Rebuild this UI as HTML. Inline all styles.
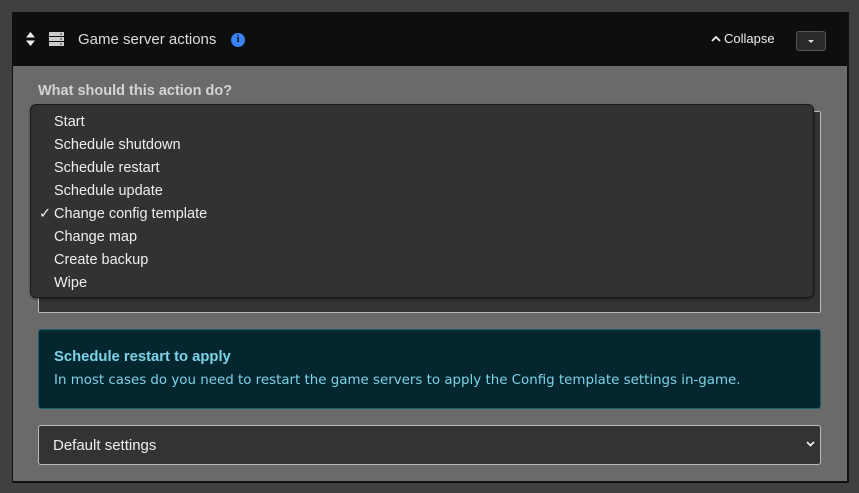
<!DOCTYPE html>
<html><head><style>
body{margin:0;width:859px;height:493px;background:#404040;font-family:"Liberation Sans",sans-serif;position:relative;overflow:hidden}
.panel{position:absolute;left:12px;top:12px;width:834px;height:468px;background:#6a6a6a;border:1px solid #111;border-right:2px solid #111;border-bottom:2px solid #111}
.hdr{position:absolute;left:0;top:0;right:0;height:53px;background:#0e0e0e;color:#ddd}
.abs{position:absolute}
.menu{position:absolute;left:30px;top:104px;width:782px;height:192px;background:#323232;border:1px solid #1a1a1a;border-radius:6px;box-shadow:0 1px 2px rgba(0,0,0,.5);color:#eee;font-size:14.5px}
.menu div{position:absolute;left:23px}
</style></head><body>
<div class="panel">
 <div class="hdr">
  <svg class="abs" style="left:13px;top:19px" width="9" height="14" viewBox="0 0 9 14"><path d="M4.5 0L9 5.5H0Z M4.5 14L9 8.5H0Z" fill="#eee"/></svg>
  <svg class="abs" style="left:36px;top:19px" width="15" height="14" viewBox="0 0 15 14"><rect y="0" width="15" height="4" fill="#ccc"/><rect y="5" width="15" height="4" fill="#ccc"/><rect y="10" width="15" height="4" fill="#ccc"/><rect x="11" y="1.5" width="2" height="1" fill="#333"/><rect x="11" y="6.5" width="2" height="1" fill="#333"/><rect x="11" y="11.5" width="2" height="1" fill="#333"/></svg>
  <div class="abs" style="left:65px;top:18px;font-size:15px;color:#ddd">Game server actions</div>
  <div class="abs" style="left:218px;top:20px;width:14px;height:14px;border-radius:50%;background:#3b82f6;color:#0e0e0e;font:bold 10px/14px 'Liberation Serif',serif;text-align:center">i</div>
  <svg class="abs" style="left:698px;top:22px" width="10" height="7" viewBox="0 0 10 7"><path d="M1 6L5 2L9 6" stroke="#eee" stroke-width="1.8" fill="none"/></svg>
  <div class="abs" style="left:711px;top:18px;font-size:13px;color:#eee">Collapse</div>
  <div class="abs" style="left:783px;top:18px;width:28px;height:18px;border:1px solid #555;border-radius:3px;background:#2a2a2a"><div style="position:absolute;left:11px;top:8px;border:3px solid transparent;border-top:3px solid #ddd"></div></div>
 </div>
</div>
<div class="abs" style="left:38px;top:83px;font-size:14.5px;font-weight:bold;color:#d4d4d4">What should this action do?</div>
<div class="abs" style="left:38px;top:111px;width:781px;height:200px;background:#333;border:1px solid #bbb;border-radius:2px"></div>
<div class="menu">
 <div style="top:9px">Start</div>
 <div style="top:32px">Schedule shutdown</div>
 <div style="top:55px">Schedule restart</div>
 <div style="top:78px">Schedule update</div>
 <div style="top:101px;left:8px">✓</div>
 <div style="top:101px">Change config template</div>
 <div style="top:124px">Change map</div>
 <div style="top:147px">Create backup</div>
 <div style="top:170px">Wipe</div>
</div>
<div class="abs" style="left:38px;top:329px;width:781px;height:78px;background:#04262f;border:1px solid #176070;border-radius:3px"></div>
<div class="abs" style="left:54px;top:349px;font-size:14.8px;font-weight:bold;color:#7dd3e8">Schedule restart to apply</div>
<div class="abs" style="left:54px;top:373px;font-size:13.4px;font-family:'DejaVu Sans',sans-serif;color:#7dd3e8;white-space:nowrap">In most cases do you need to restart the game servers to apply the Config template settings in-game.</div>
<div class="abs" style="left:38px;top:425px;width:781px;height:38px;background:#333;border:1px solid #bbb;border-radius:3px"></div>
<div class="abs" style="left:53px;top:437px;font-size:15px;color:#eee">Default settings</div>
<svg class="abs" style="left:806px;top:441px" width="9" height="6" viewBox="0 0 9 6"><path d="M1 1L4.5 4.5L8 1" stroke="#eee" stroke-width="1.8" fill="none"/></svg>
</body></html>
